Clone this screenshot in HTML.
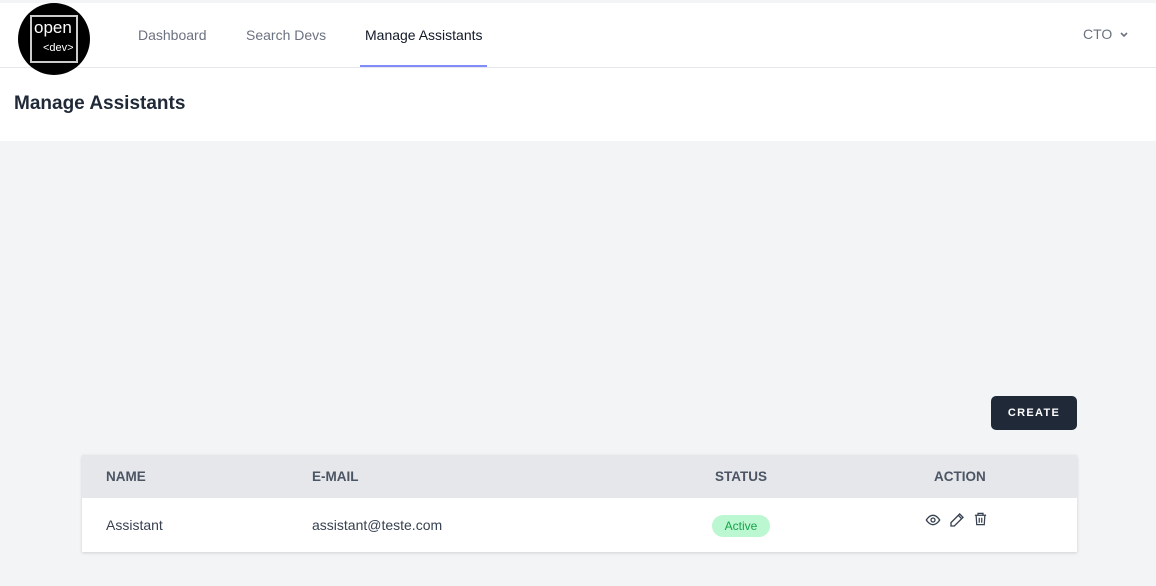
<!DOCTYPE html>
<html><head><meta charset="utf-8"><style>
*{box-sizing:border-box;margin:0;padding:0}
body{width:1156px;height:586px;background:#f3f4f6;font-family:"Liberation Sans",sans-serif;position:relative;overflow:hidden}
.top{position:absolute;top:0;left:0;right:0;height:3px;background:#f3f4f6}
.nav{position:absolute;top:3px;left:0;right:0;height:65px;background:#fff;border-bottom:1px solid #e5e7eb;z-index:2}
.logo{position:absolute;left:18px;top:0;width:72px;height:72px;border-radius:50%;background:#000;z-index:3}
.sq{position:absolute;left:12px;top:12px;width:48px;height:48px;border:2px solid #ccc;color:#fff}
.sq .a{position:absolute;left:2px;top:1px;font-size:17px}
.sq .b{position:absolute;left:11px;top:25px;font-size:11px}
.nl{position:absolute;top:24px;font-size:14px;color:#6b7280}
.act{color:#111827}
.ul{position:absolute;left:360px;top:62px;width:127px;height:2px;background:#818cf8}
.hdr{position:absolute;top:68px;left:0;right:0;height:73px;background:#fff;z-index:1}
h1{position:absolute;left:14px;top:25px;font-size:19px;font-weight:bold;color:#1f2937}
.btn{position:absolute;left:991px;top:396px;width:86px;height:34px;background:#1f2937;border-radius:5px;color:#fff;font-size:11px;font-weight:bold;letter-spacing:1.3px;text-align:center;line-height:34px}
.tbl{position:absolute;left:82px;top:455px;width:995px;height:97px;background:#fff;box-shadow:0 1px 3px rgba(0,0,0,.15)}
.th{position:absolute;left:0;top:0;width:995px;height:43px;background:#e5e7eb}
.t{position:absolute;font-size:14px;color:#374151}
.h{font-weight:bold;color:#4b5563;top:14px;font-size:13.5px}
.r{top:62px}
.badge{position:absolute;left:630px;top:60px;width:58px;height:22px;border-radius:11px;background:#bbf7d0;color:#16a34a;font-size:12px;text-align:center;line-height:22px}
svg{position:absolute}
</style></head><body>
<div class="top"></div>
<div class="nav">
<div class="logo"><div class="sq"><span class="a">open</span><span class="b">&lt;dev&gt;</span></div></div>
<span class="nl" style="left:138px">Dashboard</span>
<span class="nl" style="left:246px">Search Devs</span>
<span class="nl act" style="left:365px">Manage Assistants</span>
<div class="ul"></div>
<span class="nl" style="left:1083px;top:23px">CTO</span>
<svg style="left:1119px;top:28px" width="10" height="8" viewBox="0 0 10 8"><path d="M2 2l3 3 3-3" fill="none" stroke="#6b7280" stroke-width="1.6"/></svg>
</div>
<div class="hdr"><h1>Manage Assistants</h1></div>
<div class="btn">CREATE</div>
<div class="tbl">
<div class="th"></div>
<span class="t h" style="left:24px">NAME</span>
<span class="t h" style="left:230px">E-MAIL</span>
<span class="t h" style="left:633px">STATUS</span>
<span class="t h" style="left:852px">ACTION</span>
<span class="t r" style="left:24px">Assistant</span>
<span class="t r" style="left:230px">assistant@teste.com</span>
<div class="badge">Active</div>
<svg style="left:843px;top:57px" width="16" height="16" viewBox="0 0 24 24" fill="none" stroke="#374151" stroke-width="2"><path d="M2 12s4-7 10-7 10 7 10 7-4 7-10 7S2 12 2 12z"/><circle cx="12" cy="12" r="3"/></svg>
<svg style="left:867px;top:57px" width="16" height="16" viewBox="0 0 24 24" fill="none" stroke="#374151" stroke-width="2"><path d="M16 3l5 5L8 21H3v-5z"/><path d="M14 5l5 5"/></svg>
<svg style="left:891px;top:56px" width="15" height="16" viewBox="0 0 24 24" fill="none" stroke="#374151" stroke-width="2"><path d="M3 6h18M8 6V3h8v3M5 6l1 15h12l1-15M10 10v8M14 10v8"/></svg>
</div>
</body></html>
